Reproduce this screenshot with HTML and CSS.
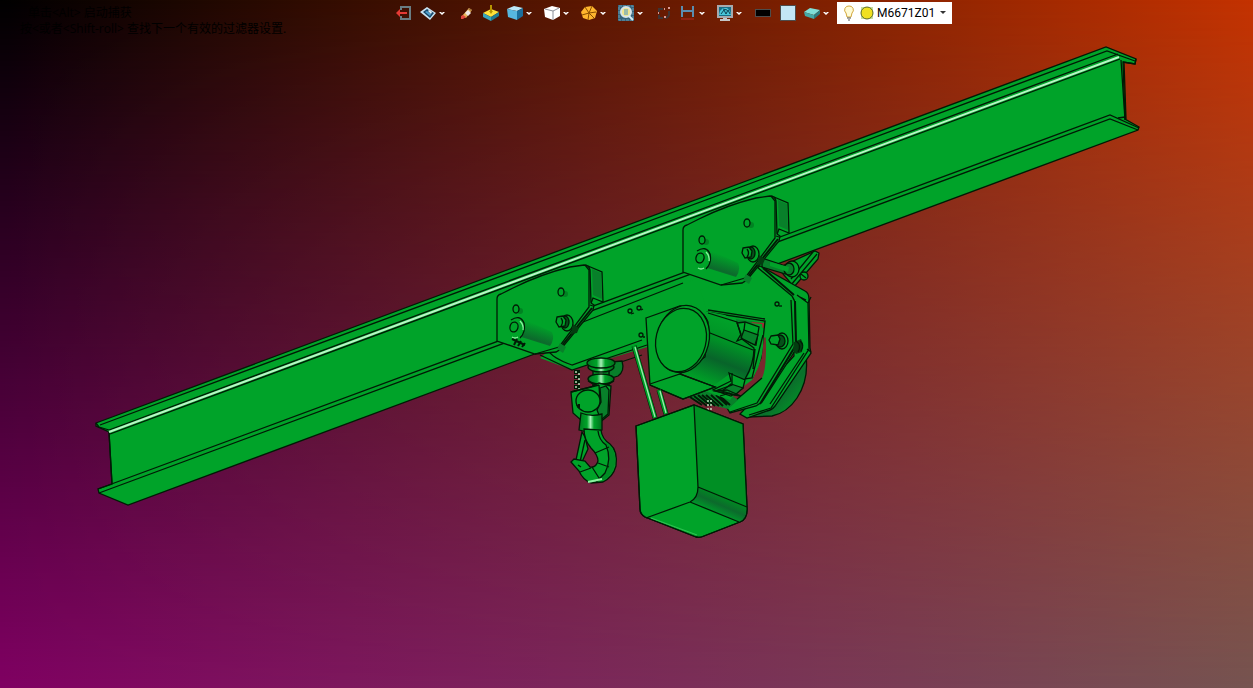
FILE: index.html
```
<!DOCTYPE html>
<html lang="zh-CN">
<head>
<meta charset="UTF-8">
<meta name="viewport" content="width=device-width,initial-scale=1.0">
<title>M6671Z01</title>
<link rel="stylesheet" href="styles.css">
</head>
<body>
<main class="viewport">

  <svg class="model" viewBox="0 0 1253 688" role="img" aria-label="M6671Z01">
    <defs>
      <linearGradient id="roller" x1="0" y1="0" x2="-.4" y2="1">
        <stop offset="0" stop-color="#00a329"/>
        <stop offset=".5" stop-color="#0c6a2c"/>
        <stop offset="1" stop-color="#009425"/>
      </linearGradient>
      <linearGradient id="motor" gradientUnits="userSpaceOnUse" x1="738" y1="322" x2="714" y2="384">
        <stop offset="0" stop-color="#00a329"/>
        <stop offset=".35" stop-color="#009226"/>
        <stop offset=".65" stop-color="#08642a"/>
        <stop offset="1" stop-color="#009c27"/>
      </linearGradient>
      <linearGradient id="bend" gradientUnits="userSpaceOnUse" x1="724" y1="497" x2="717" y2="513">
        <stop offset="0" stop-color="#008a22"/>
        <stop offset=".5" stop-color="#0c6a2c"/>
        <stop offset="1" stop-color="#00962a"/>
      </linearGradient>
      <linearGradient id="wheel" x1="0" y1="0" x2="1" y2="1">
        <stop offset=".3" stop-color="#00a329"/>
        <stop offset=".6" stop-color="#0a702b"/>
        <stop offset=".9" stop-color="#009c27"/>
      </linearGradient>
      <linearGradient id="shaft" x1="0" y1="0" x2="1" y2="0">
        <stop offset="0" stop-color="#007a20"/>
        <stop offset=".35" stop-color="#00a329"/>
        <stop offset=".5" stop-color="#a8f0b8"/>
        <stop offset=".65" stop-color="#00a329"/>
        <stop offset="1" stop-color="#006e1c"/>
      </linearGradient>

      <g id="trolley">
        <path class="face" d="M588 266l14 6 1 30-10-4-3 8z"/>
        <path class="dark" d="M592 269l9 4 1 26-9-4z"/>
        <path class="face" d="M497 299q0-4 4-5l12-6q28-14 57-21l14-2q5 0 6 5l1 33 3 2-1 5-32 39-5 3-21 2-38-13z"/>
        <path class="line" d="M585 265l4 5v37l-30 40-24 7M559 347l1 3M590 305l3 1"/>
        <path class="line bold" d="M592 308l-32 40"/>
        <path d="M522 318l30 14q3 7-2 14l-32-10z" fill="url(#roller)"/>
        <path d="M560 343l6 4-3 6-6-4z" fill="#08802a"/>
        <ellipse class="plain" cx="517" cy="328" rx="8" ry="10" transform="rotate(15 517 328)"/>
        <path class="line" d="M511 320q9-6 13 3 2 9-4 15"/>
        <path d="M520 321q4 4 3 9M512 337q3 2 6 0" fill="none" stroke="#8cf0a0"/>
        <ellipse class="face" cx="514" cy="327" rx="4" ry="5" transform="rotate(15 514 327)"/>
        <ellipse cx="565" cy="294" rx="3" ry="3" fill="#008322"/>
        <ellipse class="face" cx="561" cy="292" rx="3" ry="4"/>
        <ellipse cx="520" cy="311" rx="3" ry="3" fill="#008322"/>
        <ellipse class="face" cx="516" cy="309" rx="3" ry="4"/>
        <ellipse class="face" cx="567" cy="323" rx="6" ry="8"/>
        <ellipse class="deep" cx="565" cy="322" rx="4" ry="6"/>
        <path class="face" d="M557 317l6-1 3 4-1 6-6 1-3-5z"/>
        <path d="M561 318q3 4 0 8" class="line"/>
        <path d="M573 324l6 4-2 5-6 1z" fill="#033d10"/>
      </g>
    </defs>

    <!-- I-beam -->
    <path class="face" d="M96 423L1106 47l30 12-1 5-12-2 2 57 14 8-1 3L128 505l-29-12-1-4 14-5-3-52-13-6z"/>
    <path class="line" d="M100 425L1107 51l28 10M109 430L1118 54M110 434L1120 59M109 432l3 52M1121 60l4 60M1124 62l2 57"/>
    <path class="shine" d="M109 432L1119 57"/>
    <path class="line" d="M98 489L1110 115l29 13M99 493L1110 119l28 11M1118 118l7-1"/>
    <path class="line" d="M1123 62l12 2 1-5M96 423l3 4 10 3"/>

    <!-- carrier frame -->
    <path class="plain" d="M583 322l136-52 38-4 36 29v40l-112 10-34 2-75 23-32-12z"/>
    <path class="line" d="M583 322l100-39M540 355l32 15 75-25M548 350q4 8 24 15l70-25M606 367l36-12"/>
    <circle class="face" cx="630" cy="311" r="2"/>
    <circle class="face" cx="639" cy="308" r="2"/>
    <circle class="face" cx="641" cy="335" r="2"/>
    <path class="line" d="M631 314l3-1M641 310l2-1M643 337l2 0"/>

    <!-- cross shaft behind the upper trolley -->
    <path class="face" d="M778 268l37-17 4 2-1 6-24 28z"/>
    <path class="line" d="M817 254l-26 31M813 252l-22 27"/>
    <path class="dark line" d="M762 258l15 5 14 5-2 7-27-8z"/>
    <ellipse class="face" cx="792" cy="269" rx="7" ry="8"/>
    <ellipse class="dark line" cx="789" cy="269" rx="5" ry="6"/>
    <path class="plain" d="M770 262l19 5-1 5-18-6z"/>
    <circle class="face" cx="804" cy="276" r="4"/>
    <path class="line" d="M801 274l5 4"/>

    <!-- side plates and drum -->
    <path d="M806 356q3 24-9 42-10 15-25 18l-22 1 30-50z" fill="url(#wheel)" stroke="#001a05"/>
    <path class="face" d="M757 268l3-2 45 25q4 2 4 8l1 49 1 5-36 53q-3 4-8 5l-20 7-7-4 54-58-2-52z"/>
    <path class="line" d="M797 295l11 8 1 46-38 59-22 7M808 303l3-6M811 352l-4-3M800 297l6 3M804 353l-34 51"/>
    <path class="plain" d="M700 290l57-23 35 29q3 4 3 9l1 40q0 5-3 9l-31 48-6 4-26 7-3-5 8-7 27-23q6-12 3-55l-57-10z"/>
    <path class="line" d="M757 267l35 29q3 4 3 9l1 40q0 5-3 9l-31 48-6 4-26 7-3-5 8-7 27-23"/>
    <path class="line" d="M791 300l2 44-36 59-27 9"/>
    <path class="line bold" d="M763 268l31 27M795 301l1 44-36 59"/>
    <path class="plain" d="M730 318l36 3-5 36-14 26-14 8-12-40z"/>
    <path class="dark" d="M736 319l28 4-2 6-26-6z"/>
    <path d="M751 322l13 1v5l-6-1z" fill="#a52a31"/>
    <path class="line" d="M706 312l59 9-4 37-9 21M708 310l57 9"/>
    <circle class="face" cx="777" cy="304" r="2"/>
    <path class="line" d="M779 306h3"/>
    <ellipse class="face" cx="782" cy="341" rx="6" ry="8"/>
    <ellipse class="deep" cx="780" cy="341" rx="5" ry="6"/>
    <path class="face" d="M771 336l7-1 2 4-2 6-7-1-2-4z"/>
    <path d="M794 342l7-3 2 5-1 8-6 2-3-4z" fill="#033d10"/>
    <path class="line" d="M796 341q6 4 2 11M800 341q5 4 1 10"/>

    <!-- fins under the motor -->
    <path class="dark" d="M688 398l28-14 22 16-10 9-12-3z"/>
    <path class="line bold" d="M690 397l12 8M694 396l13 10M698 395l13 11M702 395l13 11M706 395l13 11M711 395l12 11M716 395l11 10M720 396l10 9"/>

    <!-- motor -->
    <path class="plain" d="M708 313l29 9 25 2q4 24-4 44l-6 12-16 12-6 8-25-9z"/>
    <path d="M705 311l20 4q12 6 14 18l15 13q2 16-8 34l-15-7-18 13-33-13q21-7 26-27 5-22-1-35z" fill="url(#motor)"/>
    <path class="face" d="M737 323l8-1 14 5-3 18-14-6-5 2 4-7z"/>
    <path class="dark line" d="M744 330l14 5-3 10-14-7z"/>
    <path class="line" d="M708 313l29 9 5 17 12 9q0 16-9 31l7-1 11-43M710 333l43 17M745 322l-1 8M755 349l-2 20"/>
    <path class="face" d="M729 373l16 7-2 8-12 8-18-6 18-9z"/>
    <path class="dark line" d="M731 384l12 4-8 7-13-4z"/>
    <path class="line" d="M732 373v12l-17 6 25 5M714 391l13-1 14 6M720 396l10-3"/>
    <path class="face" d="M646 318l34-12q22 1 28 16l-3 35-25 17 35 13-32 12-33-14z"/>
    <path class="line" d="M650 384l30-10 35 13-32 12-33-14"/>
    <ellipse class="face" cx="683" cy="339" rx="26" ry="34" transform="rotate(14 683 339)"/>
    <ellipse class="face" cx="681" cy="340" rx="25" ry="32" transform="rotate(14 681 340)"/>

    <!-- cables -->
    <path d="M634 346l21 72M659 390l7 24" stroke="#001a05" stroke-width="5"/>
    <path d="M634 346l21 72M659 390l7 24" stroke="#009f28" stroke-width="4"/>
    <path d="M635 347l20 70M660 391l6 22" stroke="#9ceaae"/>
    <path d="M708 400v10M711 400v10" stroke="#d2f5cf" stroke-dasharray="2 2"/>

    <!-- control box -->
    <path class="face" d="M636 426l58-21 49 19 4 83q1 12-7 15l-36 14q-4 2-8 1l-51-20q-5-3-5-8z"/>
    <path d="M694 405l49 19 4 83-49-20z" fill="#008f24"/>
    <path d="M698 487l49 20q0 11-7 15l-50-20q8-4 8-15z" fill="url(#bend)"/>
    <path class="line" d="M694 405l4 82q0 11-8 15l-44 16M698 487l49 20M690 502l49 20"/>
    <path class="line" d="M636 426l58-21 49 19 4 83q1 12-7 15l-36 14q-4 2-8 1l-51-20q-5-3-5-8z"/>
    <path d="M651 518l46 17" stroke="#2cc050"/>

    <!-- trolleys -->
    <use href="#trolley"/>
    <use href="#trolley" x="186" y="-69"/>
    <path class="line bold" d="M512 339l13 6M514 345l3-6M518 346l3-5M522 347l3-4"/>

    <!-- hook block -->
    <path class="dark line" d="M610 362l12-1q3 10-4 15l-10 3z"/>
    <path d="M577 370v21" stroke="#001a05" stroke-width="6" stroke-dasharray="4 1"/>
    <path d="M576 371v18M579 373v18" stroke="#d2f5cf" stroke-dasharray="2 3"/>
    <rect x="593" y="361" width="16" height="26" fill="url(#shaft)" stroke="#001a05"/>
    <ellipse cx="601" cy="367" rx="13" ry="5" fill="url(#shaft)" stroke="#001a05"/>
    <ellipse cx="601" cy="363" rx="14" ry="5" fill="url(#shaft)" stroke="#001a05"/>
    <ellipse cx="601" cy="379" rx="13" ry="5" fill="url(#shaft)" stroke="#001a05"/>
    <path class="line" d="M588 381q13 9 26 0"/>
    <path class="face" d="M571 392l20-5 8-4 12 3-2 29-10 8-17-2-9-8z"/>
    <path class="dark line" d="M600 388l6-2 3 4-1 24-7 6-4-10 4-8z"/>
    <path class="line" d="M571 392l28-7M599 385l1 18"/>
    <ellipse class="face" cx="588" cy="401" rx="12" ry="11"/>
    <path class="line bold" d="M577 405l2 3M579 404v4"/>
    <path d="M581 413q10 4 21 1v16q-10 4-23 0z" fill="url(#shaft)" stroke="#001a05"/>
    <path class="face" d="M582 432l-6 28 5 4 7-15-3-12z"/>
    <path class="line" d="M585 440l-5 22"/>
    <path class="face" d="M584 429l17 1q1 9 9 14 8 7 6 22-3 11-13 16l-12 1q-8-3-12-12l-8-9 3-3 11 2 5 6q6 1 8-6 0-6-7-13-7-8-7-19z"/>
    <path d="M601 441q11 6 7 23-2 10-10 15l5 1q10-4 12-16 2-14-8-21z" fill="#008c24"/>
    <path class="line" d="M598 431q1 9 8 14 6 14-1 28l-9 9M595 453l14-6M598 463l11 4M592 467l7 11M580 472l11-4M578 465l3 2"/>
    <path d="M588 482l14-3" stroke="#8cf0a0" stroke-width="2"/>
  </svg>

  <div class="hints">
    <p class="indent">单击&lt;Alt&gt; 启动捕获</p>
    <p>按&lt;或者&lt;Shift-roll&gt; 查找下一个有效的过滤器设置.</p>
  </div>

  <nav class="toolbar" aria-label="视图工具栏">
    <button class="tool" aria-label="退出">
      <svg class="icon" viewBox="0 0 16 16"><path d="M5 5V2h9v12H5v-3" fill="none" stroke="#697d83" stroke-width="2"/><path d="M0 8l4-4v3h7v2H4v3z" fill="#e43a35"/></svg>
    </button>
    <button class="tool drop" aria-label="显示样式">
      <svg class="icon" viewBox="0 0 16 16"><path d="M0 7l7-5 9 6-6 7z" fill="#c9e3f2"/><path d="M3 7l4-3 7 4-4 5z" fill="#17486b"/><path d="M5 7l2-1 4 3-1 2z" fill="#4f9fce"/><path d="M9 5l3 2-1 2-3-3z" fill="#e6f3fa"/></svg>
      <svg class="caret" viewBox="0 0 6 6"><path d="M0 2h2l1 1 1-1h2L3 5z"/></svg>
    </button>
    <button class="tool" aria-label="编辑外观">
      <svg class="icon" viewBox="0 0 16 16"><path d="M4 11l7-8 3 2-6 8z" fill="#e6b45a"/><path d="M7 8l3-3 3 3-3 3z" fill="#eee8e4"/><path d="M3 11l2-1 3 2-3 2H3z" fill="#e3483e"/><path d="M11 3l3 2-1 1-3-2z" fill="#9a6a3a"/></svg>
    </button>
    <button class="tool" aria-label="基准面">
      <svg class="icon" viewBox="0 0 16 16"><path d="M0 8l8-4 8 3-8 5z" fill="#ffe23b"/><path d="M0 8l8 4v4l-8-4z" fill="#37a6bd"/><path d="M8 12l8-5v4l-8 5z" fill="#207b93"/><path d="M7 0h2v6h1L8 9 6 6h1z" fill="#b79500"/></svg>
    </button>
    <button class="tool drop" aria-label="着色">
      <svg class="icon" viewBox="0 0 16 16"><path d="M0 4l7-3 9 2-6 3z" fill="#bce8f7"/><path d="M0 4l10 2v9L1 12z" fill="#57b7df"/><path d="M10 6l6-3v8l-6 4z" fill="#1b6e9b"/></svg>
      <svg class="caret" viewBox="0 0 6 6"><path d="M0 2h2l1 1 1-1h2L3 5z"/></svg>
    </button>
    <button class="tool drop" aria-label="视图方向">
      <svg class="icon" viewBox="0 0 16 16"><path d="M0 4l8-3 8 2v8l-7 4-8-3z" fill="#fff"/><path d="M1 4l8 2 6-3M9 6v9" fill="none" stroke="#8a8f99"/></svg>
      <svg class="caret" viewBox="0 0 6 6"><path d="M0 2h2l1 1 1-1h2L3 5z"/></svg>
    </button>
    <button class="tool drop" aria-label="剖视">
      <svg class="icon" viewBox="0 0 16 16"><path d="M4 2l7-1 5 5-2 7-6 2-6-2-2-6z" fill="#ffb62e"/><path d="M8 8L4 2M8 8l7-1M8 8l5 5M8 8l-1 7M8 8L1 10M8 8l3-7" stroke="#8a4e00"/></svg>
      <svg class="caret" viewBox="0 0 6 6"><path d="M0 2h2l1 1 1-1h2L3 5z"/></svg>
    </button>
    <button class="tool drop" aria-label="缩放">
      <svg class="icon" viewBox="0 0 16 16"><path d="M0 0h16v16H0z" fill="#35637b"/><path d="M1 1h14v14H1z" fill="none" stroke="#6b9bb0" stroke-dasharray="3 1"/><circle cx="8" cy="7" r="5" fill="#f2e58a" stroke="#d7e4e8" stroke-width="2"/><path d="M6 4h4v6H6z" fill="#9bbba8"/><path d="M11 11l4 4" stroke="#d7edf5" stroke-width="2"/></svg>
      <svg class="caret" viewBox="0 0 6 6"><path d="M0 2h2l1 1 1-1h2L3 5z"/></svg>
    </button>
    <button class="tool" aria-label="旋转">
      <svg class="icon" viewBox="0 0 16 16"><path d="M3 7V4h4M3 10v3h4M13 6v4q-1 3-4 3" fill="none" stroke="#3f3434" stroke-width="2"/><path d="M8 4h1M12 3h2M8 12h2M2 8h1" stroke="#d99a94" stroke-width="2"/></svg>
    </button>
    <button class="tool drop" aria-label="测量">
      <svg class="icon" viewBox="0 0 16 16"><path d="M2 1v11M13 1v11M3 6h10" fill="none" stroke="#5a8db0" stroke-width="2"/><path d="M1 14h13" stroke="#b02a20"/></svg>
      <svg class="caret" viewBox="0 0 6 6"><path d="M0 2h2l1 1 1-1h2L3 5z"/></svg>
    </button>
    <button class="tool drop" aria-label="显示设置">
      <svg class="icon" viewBox="0 0 16 16"><path d="M0 0h16v13H0z" fill="#a6a9ad"/><path d="M2 2h12v9H2z" fill="#176d86"/><path d="M2 10l1-4 3-3h4l3 3 1 4z" fill="#49c5d8"/><path d="M4 9l3-4 2 4 2-4 2 4M6 4l4 1" fill="none" stroke="#0d4052"/><path d="M6 13h4v1h3v2H3v-2h3z" fill="#c4c6c8"/></svg>
      <svg class="caret" viewBox="0 0 6 6"><path d="M0 2h2l1 1 1-1h2L3 5z"/></svg>
    </button>
    <button class="tool" aria-label="线条颜色"><span class="swatch ink"></span></button>
    <button class="tool" aria-label="背景颜色"><span class="swatch sky"></span></button>
    <button class="tool drop" aria-label="图层">
      <svg class="icon" viewBox="0 0 16 16"><path d="M0 7l6-4 10 2-6 5z" fill="#7fe0d8"/><path d="M0 7l10 3v4L1 11z" fill="#43a9a6"/><path d="M10 10l6-5v4l-6 5z" fill="#2c7c7e"/></svg>
      <svg class="caret" viewBox="0 0 6 6"><path d="M0 2h2l1 1 1-1h2L3 5z"/></svg>
    </button>

    <div class="layer">
      <svg class="icon" viewBox="0 0 16 16"><path d="M8 1a4 4 0 0 1 3 7l-1 4H6L5 8a4 4 0 0 1 3-7z" fill="#fffbd6" stroke="#d3a73a"/><path d="M6 13h4M7 15h2" stroke="#555"/></svg>
      <svg class="icon" viewBox="0 0 16 16"><path d="M2 2h12v12H2z" fill="#c8dfa0"/><circle cx="8" cy="8" r="6" fill="#f0e020" stroke="#5d6b2a"/></svg>
      <select class="layer-name" aria-label="图层名称"><option>M6671Z01</option></select>
      <svg class="arrow" viewBox="0 0 6 4"><path d="M0 0h6L3 3z"/></svg>
    </div>
  </nav>

</main>
</body>
</html>
```
FILE: styles.css
```
body{
  margin:0;
  font-family:"Open Sans","Noto Sans CJK SC",sans-serif;
  font-size:12px;
}

/* four-corner backdrop: the lower ramp fades in over the upper one */
.viewport{
  position:relative;
  min-height:100vh;
  display:flex;
  isolation:isolate;
  overflow:hidden;
  background:linear-gradient(to right,#000,#c43200);
}
.viewport::before{
  content:"";
  position:absolute;
  inset:0;
  z-index:-1;
  background:linear-gradient(to right,#800062,#755450);
  -webkit-mask-image:linear-gradient(to bottom,transparent,#000);
  mask-image:linear-gradient(to bottom,transparent,#000);
}

/* ---------- model ---------- */
.model{
  flex:1;
  width:100%;
  min-width:0;
  stroke-width:1.3;
}
.face{
  fill:#00a329;
  stroke:#001a05;
}
.plain{
  fill:#00a329;
}
.dark{
  fill:#08802a;
}
.deep{
  fill:#06501a;
  stroke:#001a05;
}
.line{
  stroke:#001a05;
}
.line:not(.dark){
  fill:none;
}
.bold{
  stroke-width:2;
}
.shine{
  stroke:#b9f5c6;
  stroke-width:2;
}

/* ---------- hints ---------- */
.hints{
  position:absolute;
  top:5px;
  left:20px;
  color:#000;
  line-height:16px;
}
.hints p{
  margin:0;
}
.hints .indent{
  padding-left:8px;
}

/* ---------- toolbar ---------- */
.toolbar{
  position:absolute;
  top:2px;
  left:0;
  right:0;
  display:flex;
  align-items:center;
  padding-left:391px;
}
.tool{
  display:flex;
  align-items:center;
  justify-content:center;
  width:25px;
  height:22px;
  padding:0;
  border:0;
  background:none;
}
.tool.drop{
  width:37px;
  justify-content:flex-start;
  gap:3px;
  padding-left:4px;
}
.icon{
  flex:none;
  width:16px;
  height:16px;
  stroke-width:1;
}
.caret{
  width:6px;
  height:6px;
  fill:#fff;
}
.swatch{
  border:1px solid #4d4d4d;
}
.swatch.ink{
  width:14px;
  height:6px;
  background:#000;
}
.swatch.sky{
  width:14px;
  height:14px;
  background:#c3e6f5;
}
.layer{
  display:flex;
  align-items:center;
  box-sizing:border-box;
  width:115px;
  height:22px;
  padding:0 6px 0 4px;
  background:#fff;
}
.layer .icon + .icon{
  margin-left:2px;
}
.layer-name{
  flex:1;
  min-width:0;
  padding:0 0 0 2px;
  border:0;
  background:none;
  appearance:none;
  font-family:Roboto,sans-serif;
  font-size:12px;
  color:#000;
}
.arrow{
  width:6px;
  height:4px;
  fill:#333;
}
```
